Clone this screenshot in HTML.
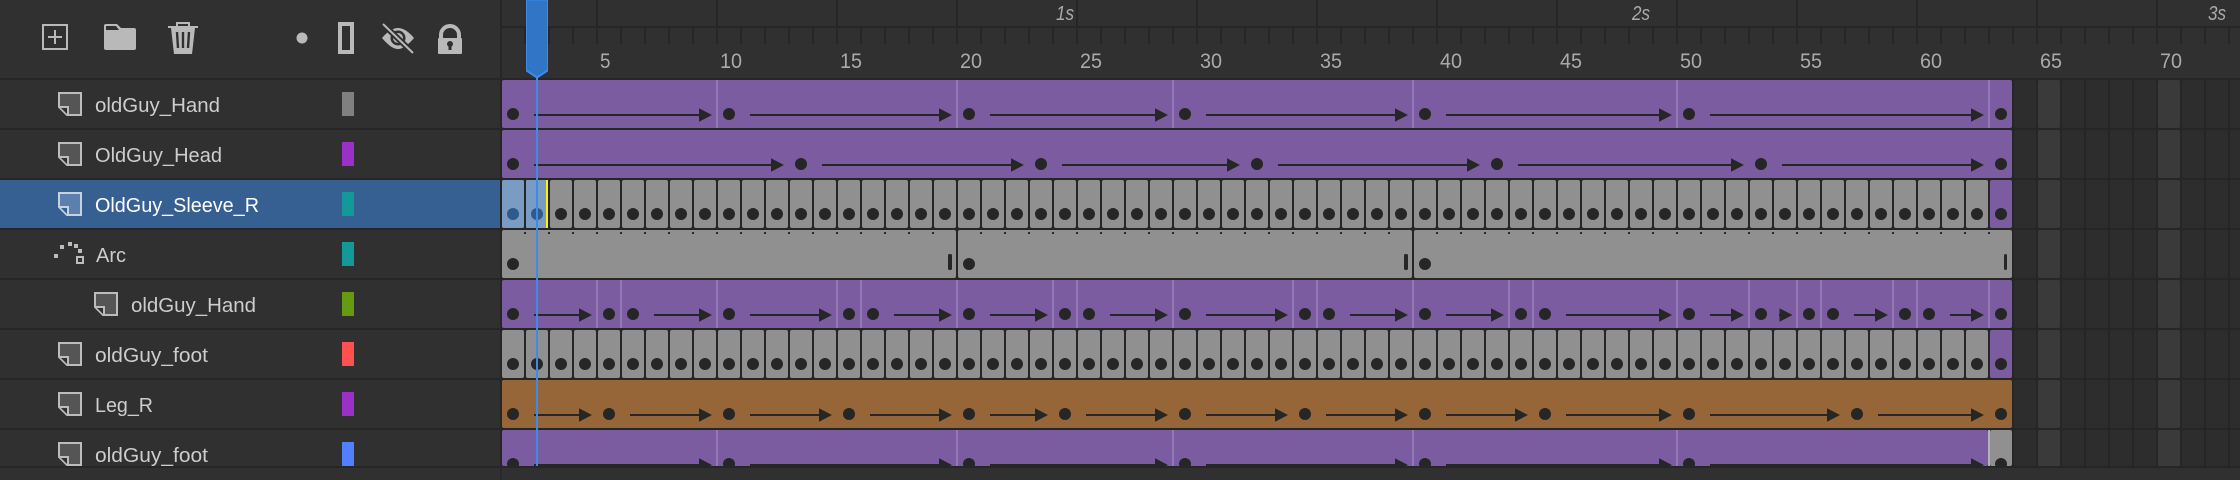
<!DOCTYPE html>
<html>
<head>
<meta charset="utf-8">
<title>Timeline</title>
<style>
html,body{margin:0;padding:0;background:#262626;width:2240px;height:480px;overflow:hidden}
svg{display:block}
text{font-family:"Liberation Sans",sans-serif}
.l{font-size:20px;fill:#cdcdcd}
.n{font-size:21px;fill:#aaa}
.s{font-size:20px;font-style:italic;fill:#aaa}
</style>
</head>
<body>
<svg xmlns="http://www.w3.org/2000/svg" width="2240" height="480" viewBox="0 0 2240 480">
<defs>
<marker id="a" markerUnits="userSpaceOnUse" markerWidth="14" markerHeight="14" refX="0" refY="7" orient="0" overflow="visible"><path d="M0 .3L13 7L0 13.7Z" fill="#262626"/></marker>
<pattern id="c" x="502" y="180" width="24" height="50" patternUnits="userSpaceOnUse"><rect width="22" height="48" rx="2" fill="#909090"/></pattern>
<pattern id="e" x="2038" y="80" width="120" height="50" patternUnits="userSpaceOnUse">
<rect x="0" width="22" height="48" rx="2" fill="#3a3a3a"/><rect x="24" width="22" height="48" rx="2" fill="#2d2d2d"/><rect x="48" width="22" height="48" rx="2" fill="#2d2d2d"/><rect x="72" width="22" height="48" rx="2" fill="#2d2d2d"/><rect x="96" width="22" height="48" rx="2" fill="#2d2d2d"/>
</pattern>
<pattern id="t" x="502" y="28" width="24" height="16" patternUnits="userSpaceOnUse"><rect x="22" width="2" height="16" fill="#262626"/></pattern>
<pattern id="T" x="596" y="0" width="120" height="26" patternUnits="userSpaceOnUse"><rect width="2" height="26" fill="#262626"/></pattern>
<pattern id="m" x="502" y="230" width="24" height="50" patternUnits="userSpaceOnUse"><rect x="22" y="2" width="2" height="2" fill="#262626"/></pattern>
<g id="p"><path d="M59 93H81V115H67L59 107Z" fill="#555" stroke="#bcbcbc" stroke-width="2"/><path d="M60 107H68V115" fill="#303030" stroke="#bcbcbc" stroke-width="2"/></g>
</defs>

<rect width="2240" height="480" fill="#262626"/>
<!-- header + ruler -->
<rect width="500" height="78" fill="#303030"/>
<rect x="502" width="1738" height="26" fill="#303030"/>
<rect x="502" y="28" width="1738" height="50" fill="#303030"/>
<rect x="502" y="28" width="1738" height="16" fill="url(#t)"/>
<rect x="596" width="1644" height="26" fill="url(#T)"/>

<!-- header icons -->
<rect x="43" y="25" width="24" height="24" fill="none" stroke="#b9b9b9" stroke-width="2"/>
<path d="M48 37H62M55 30V44" stroke="#b9b9b9" stroke-width="2" fill="none"/>
<path d="M104 26q0-2 2-2H117L121 28H134q2 0 2 2V48q0 2-2 2H106q-2 0-2-2Z" fill="#b9b9b9"/>
<path d="M106 26H116L119 30H106Z" fill="#303030"/>
<path d="M177 26V23H189V26" fill="none" stroke="#b9b9b9" stroke-width="2"/>
<path d="M168 26H198V28H168Z" fill="#b9b9b9"/>
<path d="M171 28H195L192 54H174Z" fill="#b9b9b9"/>
<path d="M177 32L178 48M183 32V48M189 32L188 48" stroke="#303030" stroke-width="2.4" fill="none"/>
<circle cx="302" cy="38" r="5.5" fill="#b9b9b9"/>
<rect x="340" y="24" width="12" height="28" fill="none" stroke="#b9b9b9" stroke-width="4"/>
<path d="M382 38C388 31 393 28 398 28S408 31 414 38C408 45 403 49 398 49S388 45 382 38Z" fill="#b9b9b9"/>
<circle cx="398" cy="38" r="7.5" fill="#303030"/><circle cx="398" cy="38" r="5" fill="#b9b9b9"/>
<path d="M383 24L413 53" stroke="#303030" stroke-width="6" fill="none"/>
<path d="M383 24L413 53" stroke="#b9b9b9" stroke-width="2" fill="none"/>
<path d="M441 40V35a9 9 0 0 1 18 0V40" fill="none" stroke="#b9b9b9" stroke-width="4"/>
<rect x="438" y="38" width="24" height="16" rx="1" fill="#b9b9b9"/>
<circle cx="450" cy="44" r="3" fill="#303030"/><rect x="448.5" y="44" width="3" height="6" fill="#303030"/>

<!-- time labels -->
<text class="s" x="1056" y="20" textLength="18" lengthAdjust="spacingAndGlyphs">1s</text>
<text class="s" x="1632" y="20" textLength="18" lengthAdjust="spacingAndGlyphs">2s</text>
<text class="s" x="2208" y="20" textLength="18" lengthAdjust="spacingAndGlyphs">3s</text>
<text class="n" x="600" y="68" textLength="10.5" lengthAdjust="spacingAndGlyphs">5</text>
<text class="n" x="720" y="68" textLength="22" lengthAdjust="spacingAndGlyphs">10</text>
<text class="n" x="840" y="68" textLength="22" lengthAdjust="spacingAndGlyphs">15</text>
<text class="n" x="960" y="68" textLength="22" lengthAdjust="spacingAndGlyphs">20</text>
<text class="n" x="1080" y="68" textLength="22" lengthAdjust="spacingAndGlyphs">25</text>
<text class="n" x="1200" y="68" textLength="22" lengthAdjust="spacingAndGlyphs">30</text>
<text class="n" x="1320" y="68" textLength="22" lengthAdjust="spacingAndGlyphs">35</text>
<text class="n" x="1440" y="68" textLength="22" lengthAdjust="spacingAndGlyphs">40</text>
<text class="n" x="1560" y="68" textLength="22" lengthAdjust="spacingAndGlyphs">45</text>
<text class="n" x="1680" y="68" textLength="22" lengthAdjust="spacingAndGlyphs">50</text>
<text class="n" x="1800" y="68" textLength="22" lengthAdjust="spacingAndGlyphs">55</text>
<text class="n" x="1920" y="68" textLength="22" lengthAdjust="spacingAndGlyphs">60</text>
<text class="n" x="2040" y="68" textLength="22" lengthAdjust="spacingAndGlyphs">65</text>
<text class="n" x="2160" y="68" textLength="22" lengthAdjust="spacingAndGlyphs">70</text>

<!-- left rows -->
<rect y="80" width="500" height="48" fill="#303030"/>
<rect y="130" width="500" height="48" fill="#303030"/>
<rect y="180" width="500" height="48" fill="#366092"/>
<rect y="230" width="500" height="48" fill="#303030"/>
<rect y="280" width="500" height="48" fill="#303030"/>
<rect y="330" width="500" height="48" fill="#303030"/>
<rect y="380" width="500" height="48" fill="#303030"/>
<rect y="430" width="500" height="36" fill="#303030"/>

<use href="#p"/>
<use href="#p" y="50"/>
<g transform="translate(0 100)"><path d="M59 93H81V115H67L59 107Z" fill="#5b80ae" stroke="#c6d2e0" stroke-width="2"/><path d="M60 107H68V115" fill="#366092" stroke="#c6d2e0" stroke-width="2"/></g>
<path d="M54 254h4v4h-4zM60 245h4v4h-4zM68 242h4v4h-4zM74 244h4v4h-4zM78 249h4v4h-4z" fill="#bcbcbc"/>
<rect x="77" y="257" width="6" height="6" fill="none" stroke="#bcbcbc" stroke-width="2"/>
<use href="#p" x="36" y="200"/>
<use href="#p" y="250"/>
<use href="#p" y="300"/>
<use href="#p" y="350"/>
<rect y="466" width="500" height="2" fill="#262626"/>

<text class="l" x="95" y="112" textLength="125" lengthAdjust="spacingAndGlyphs">oldGuy_Hand</text>
<text class="l" x="95" y="162" textLength="127" lengthAdjust="spacingAndGlyphs">OldGuy_Head</text>
<text class="l" x="95" y="212" textLength="164" lengthAdjust="spacingAndGlyphs" style="fill:#fff">OldGuy_Sleeve_R</text>
<text class="l" x="96" y="262" textLength="30" lengthAdjust="spacingAndGlyphs">Arc</text>
<text class="l" x="131" y="312" textLength="125" lengthAdjust="spacingAndGlyphs">oldGuy_Hand</text>
<text class="l" x="95" y="362" textLength="113" lengthAdjust="spacingAndGlyphs">oldGuy_foot</text>
<text class="l" x="95" y="412" textLength="58" lengthAdjust="spacingAndGlyphs">Leg_R</text>
<text class="l" x="95" y="462" textLength="113" lengthAdjust="spacingAndGlyphs">oldGuy_foot</text>

<rect x="342" y="92" width="12" height="24" fill="#808080"/>
<rect x="342" y="142" width="12" height="24" fill="#9a30c8"/>
<rect x="342" y="192" width="12" height="24" fill="#14999a"/>
<rect x="342" y="242" width="12" height="24" fill="#14999a"/>
<rect x="342" y="292" width="12" height="24" fill="#669a10"/>
<rect x="342" y="342" width="12" height="24" fill="#ff5050"/>
<rect x="342" y="392" width="12" height="24" fill="#9a30c8"/>
<rect x="342" y="442" width="12" height="24" fill="#5080ff"/>

<!-- empty frames -->
<rect x="2014" y="80" width="226" height="386" fill="url(#e)"/>

<!-- row backgrounds -->
<rect x="502" y="80" width="1510" height="48" rx="2" fill="#7c5ca0"/>
<rect x="502" y="130" width="1510" height="48" rx="2" fill="#7c5ca0"/>
<rect x="502" y="180" width="1488" height="48" fill="url(#c)"/>
<rect x="1990" y="180" width="22" height="48" rx="2" fill="#7c5ca0"/>
<rect x="502" y="180" width="22" height="48" rx="2" fill="#7a9bc2"/>
<rect x="526" y="180" width="20" height="48" rx="1" fill="#7a9bc2"/>
<rect x="546" y="180" width="2" height="48" fill="#fff200"/>
<rect x="548" y="180" width="2" height="48" fill="#262626"/>
<rect x="502" y="230" width="454" height="48" rx="2" fill="#909090"/>
<rect x="958" y="230" width="454" height="48" rx="2" fill="#909090"/>
<rect x="1414" y="230" width="598" height="48" rx="2" fill="#909090"/>
<rect x="502" y="230" width="1488" height="6" fill="url(#m)"/>
<rect x="502" y="280" width="1510" height="48" rx="2" fill="#7c5ca0"/>
<rect x="502" y="330" width="1488" height="48" fill="url(#c)"/>
<rect x="1990" y="330" width="22" height="48" rx="2" fill="#7c5ca0"/>
<rect x="502" y="380" width="1510" height="48" rx="2" fill="#966639"/>
<rect x="502" y="430" width="1486" height="36" rx="2" fill="#7c5ca0"/>
<rect x="1990" y="430" width="22" height="36" rx="2" fill="#909090"/>
<rect x="1988" y="430" width="2" height="36" fill="#b5b0bb"/>

<!-- keyframe separators -->
<path fill="none" stroke="#9278b4" stroke-width="2" d="M717 80V128M957 80V128M1173 80V128M1413 80V128M1677 80V128M1989 80V128
M597 280V328M621 280V328M717 280V328M837 280V328M861 280V328M957 280V328M1053 280V328M1077 280V328M1173 280V328M1293 280V328M1317 280V328M1413 280V328M1509 280V328M1533 280V328M1677 280V328M1749 280V328M1797 280V328M1821 280V328M1893 280V328M1917 280V328M1989 280V328
M717 430V466M957 430V466M1173 430V466M1413 430V466M1677 430V466"/>

<!-- tween end markers -->
<rect x="948" y="254" width="4" height="16" rx="1.5" fill="#262626"/>
<rect x="1404" y="254" width="4" height="16" rx="1.5" fill="#262626"/>
<rect x="2004" y="254" width="3" height="16" rx="1.5" fill="#262626"/>

<!-- arrows -->
<g fill="none" stroke="#262626" stroke-width="2">
<path marker-end="url(#a)" d="M534 115H699"/><path marker-end="url(#a)" d="M750 115H939"/><path marker-end="url(#a)" d="M990 115H1155"/><path marker-end="url(#a)" d="M1206 115H1395"/><path marker-end="url(#a)" d="M1446 115H1659"/><path marker-end="url(#a)" d="M1710 115H1971"/>
<path marker-end="url(#a)" d="M534 165H771"/><path marker-end="url(#a)" d="M822 165H1011"/><path marker-end="url(#a)" d="M1062 165H1227"/><path marker-end="url(#a)" d="M1278 165H1467"/><path marker-end="url(#a)" d="M1518 165H1731"/><path marker-end="url(#a)" d="M1782 165H1971"/>
<path marker-end="url(#a)" d="M534 315H579"/><path marker-end="url(#a)" d="M654 315H699"/><path marker-end="url(#a)" d="M750 315H819"/><path marker-end="url(#a)" d="M894 315H939"/><path marker-end="url(#a)" d="M990 315H1035"/><path marker-end="url(#a)" d="M1110 315H1155"/><path marker-end="url(#a)" d="M1206 315H1275"/><path marker-end="url(#a)" d="M1350 315H1395"/><path marker-end="url(#a)" d="M1446 315H1491"/><path marker-end="url(#a)" d="M1566 315H1659"/><path marker-end="url(#a)" d="M1710 315H1731"/><path marker-end="url(#a)" d="M1779 315H1779.5"/><path marker-end="url(#a)" d="M1854 315H1875"/><path marker-end="url(#a)" d="M1950 315H1971"/>
<path marker-end="url(#a)" d="M534 415H579"/><path marker-end="url(#a)" d="M630 415H699"/><path marker-end="url(#a)" d="M750 415H819"/><path marker-end="url(#a)" d="M870 415H939"/><path marker-end="url(#a)" d="M990 415H1035"/><path marker-end="url(#a)" d="M1086 415H1155"/><path marker-end="url(#a)" d="M1206 415H1275"/><path marker-end="url(#a)" d="M1326 415H1395"/><path marker-end="url(#a)" d="M1446 415H1515"/><path marker-end="url(#a)" d="M1566 415H1659"/><path marker-end="url(#a)" d="M1710 415H1827"/><path marker-end="url(#a)" d="M1878 415H1971"/>
<path marker-end="url(#a)" d="M534 465H699"/><path marker-end="url(#a)" d="M750 465H939"/><path marker-end="url(#a)" d="M990 465H1155"/><path marker-end="url(#a)" d="M1206 465H1395"/><path marker-end="url(#a)" d="M1446 465H1659"/><path marker-end="url(#a)" d="M1710 465H1971"/>
</g>

<!-- keyframe dots -->
<path fill="none" stroke="#262626" stroke-width="12" stroke-linecap="round" d="M513 114h0M729 114h0M969 114h0M1185 114h0M1425 114h0M1689 114h0M2001 114h0
M513 164h0M801 164h0M1041 164h0M1257 164h0M1497 164h0M1761 164h0M2001 164h0
M561 214h0M585 214h0M609 214h0M633 214h0M657 214h0M681 214h0M705 214h0M729 214h0M753 214h0M777 214h0M801 214h0M825 214h0M849 214h0M873 214h0M897 214h0M921 214h0M945 214h0M969 214h0M993 214h0M1017 214h0M1041 214h0M1065 214h0M1089 214h0M1113 214h0M1137 214h0M1161 214h0M1185 214h0M1209 214h0M1233 214h0M1257 214h0M1281 214h0M1305 214h0M1329 214h0M1353 214h0M1377 214h0M1401 214h0M1425 214h0M1449 214h0M1473 214h0M1497 214h0M1521 214h0M1545 214h0M1569 214h0M1593 214h0M1617 214h0M1641 214h0M1665 214h0M1689 214h0M1713 214h0M1737 214h0M1761 214h0M1785 214h0M1809 214h0M1833 214h0M1857 214h0M1881 214h0M1905 214h0M1929 214h0M1953 214h0M1977 214h0M2001 214h0
M513 264h0M969 264h0M1425 264h0
M513 314h0M609 314h0M633 314h0M729 314h0M849 314h0M873 314h0M969 314h0M1065 314h0M1089 314h0M1185 314h0M1305 314h0M1329 314h0M1425 314h0M1521 314h0M1545 314h0M1689 314h0M1761 314h0M1809 314h0M1833 314h0M1905 314h0M1929 314h0M2001 314h0
M513 364h0M537 364h0M561 364h0M585 364h0M609 364h0M633 364h0M657 364h0M681 364h0M705 364h0M729 364h0M753 364h0M777 364h0M801 364h0M825 364h0M849 364h0M873 364h0M897 364h0M921 364h0M945 364h0M969 364h0M993 364h0M1017 364h0M1041 364h0M1065 364h0M1089 364h0M1113 364h0M1137 364h0M1161 364h0M1185 364h0M1209 364h0M1233 364h0M1257 364h0M1281 364h0M1305 364h0M1329 364h0M1353 364h0M1377 364h0M1401 364h0M1425 364h0M1449 364h0M1473 364h0M1497 364h0M1521 364h0M1545 364h0M1569 364h0M1593 364h0M1617 364h0M1641 364h0M1665 364h0M1689 364h0M1713 364h0M1737 364h0M1761 364h0M1785 364h0M1809 364h0M1833 364h0M1857 364h0M1881 364h0M1905 364h0M1929 364h0M1953 364h0M1977 364h0M2001 364h0
M513 414h0M609 414h0M729 414h0M849 414h0M969 414h0M1065 414h0M1185 414h0M1305 414h0M1425 414h0M1545 414h0M1689 414h0M1857 414h0M2001 414h0
M513 464h0M729 464h0M969 464h0M1185 464h0M1425 464h0M1689 464h0M2001 464h0"/>
<path fill="none" stroke="#2f5a8c" stroke-width="12" stroke-linecap="round" d="M513 214h0M537 214h0"/>

<!-- bottom -->
<rect y="466" width="2240" height="2" fill="#262626"/>
<rect y="468" width="2240" height="12" fill="#303030"/>
<rect x="500" y="468" width="2" height="12" fill="#2a2a2a"/>

<!-- playhead -->
<rect x="536" y="78" width="2" height="388" fill="#3a8ce8"/>
<path d="M526.5 0H547.5V70.5L537 77.5L526.5 70.5Z" fill="#3076c4" stroke="#3a8ce8" stroke-width="1"/>
<path d="M526.5 70.5L537 77.5L547.5 70.5" fill="none" stroke="#3a8ce8" stroke-width="2"/>
</svg>
</body>
</html>
